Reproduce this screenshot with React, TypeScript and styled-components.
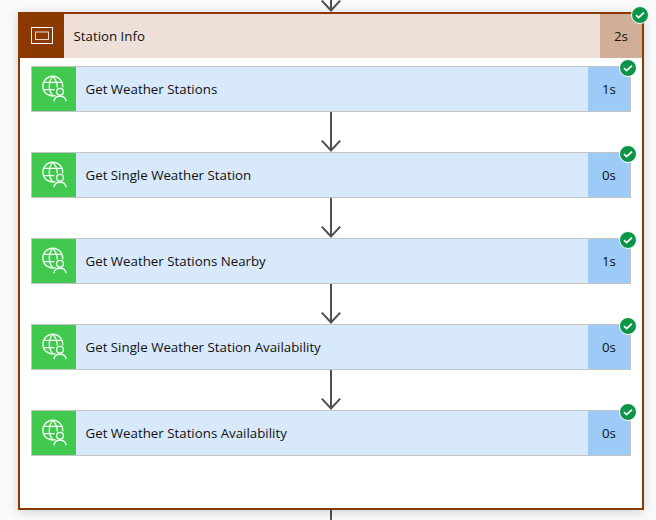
import { Fragment } from 'react'
import styled, { createGlobalStyle } from 'styled-components'

const brown = '#8c3900'
const arrowColor = '#505050'

const steps = [
  { name: 'Get Weather Stations', duration: '1s' },
  { name: 'Get Single Weather Station', duration: '0s' },
  { name: 'Get Weather Stations Nearby', duration: '1s' },
  { name: 'Get Single Weather Station Availability', duration: '0s' },
  { name: 'Get Weather Stations Availability', duration: '0s' },
]

const GlobalStyle = createGlobalStyle`
  html, body {
    margin: 0;
    padding: 0;
    background: #fafafa;
    overflow: hidden;
  }
  body {
    font-family: "Open Sans", "Noto Sans", "Liberation Sans", sans-serif;
  }
`

const Page = styled.div`
  width: 656px;
  height: 520px;
  overflow: hidden;
  display: flex;
  flex-direction: column;
  align-items: center;
  padding-left: 6px;
  box-sizing: border-box;
`

const TopConnector = styled.div`
  height: 12px;
  flex: none;
  overflow: hidden;
  display: flex;
  align-items: flex-end;
`

const BottomLine = styled.div`
  width: 2px;
  height: 10px;
  flex: none;
  background: ${arrowColor};
`

const Scope = styled.div`
  position: relative;
  width: 626px;
  height: 498px;
  flex: none;
  box-sizing: border-box;
  border: 2px solid ${brown};
  background: #fff;
  box-shadow: 0 2px 10px rgba(0, 0, 0, 0.16);
`

const ScopeHeader = styled.div`
  height: 44px;
  display: flex;
  align-items: stretch;
  background: #eee0d9;
`

const ScopeIcon = styled.div`
  width: 44px;
  flex: none;
  display: flex;
  align-items: center;
  justify-content: center;
  background: ${brown};
`

const Title = styled.div<{ $indent: number }>`
  flex: 1;
  display: flex;
  align-items: center;
  padding-left: ${(p) => p.$indent}px;
  font-size: 13.3px;
  color: #111;
  white-space: nowrap;
`

const Duration = styled.div<{ $color: string }>`
  width: 42px;
  flex: none;
  display: flex;
  align-items: center;
  justify-content: center;
  font-size: 13.3px;
  color: #111;
  background: ${(p) => p.$color};
`

const StepList = styled.div`
  display: flex;
  flex-direction: column;
  align-items: center;
  padding: 8px 11px 0;
`

const Card = styled.div`
  position: relative;
  width: 600px;
  height: 46px;
  flex: none;
  box-sizing: border-box;
  display: flex;
  align-items: stretch;
  border: 1px solid #c4c4c4;
  background: #d7e9fb;
`

const CardIcon = styled.div`
  width: 44px;
  flex: none;
  display: flex;
  align-items: center;
  justify-content: center;
  background: #41c94f;
`

const Badge = styled.div<{ $top: number; $right: number }>`
  position: absolute;
  top: ${(p) => p.$top}px;
  right: ${(p) => p.$right}px;
  width: 18px;
  height: 18px;
  box-sizing: border-box;
  border: 1px solid #fff;
  border-radius: 50%;
  background: #0c9449;
  display: flex;
  align-items: center;
  justify-content: center;
`

const ArrowSvg = styled.svg`
  display: block;
  flex: none;
`

function Check() {
  return (
    <svg width="12" height="10" viewBox="0 0 12 10">
      <path d="M2 5.2 4.6 7.6 10 2.6" fill="none" stroke="#fff" strokeWidth="1.8" />
    </svg>
  )
}

function Arrow() {
  return (
    <ArrowSvg width="22" height="40" viewBox="0 0 22 40">
      <path d="M11 0V38.5M1.8 28.6 11 38.5 20.2 28.6" fill="none" stroke={arrowColor} strokeWidth="2" />
    </ArrowSvg>
  )
}

function GlobeUser() {
  return (
    <svg width="26" height="28" viewBox="0 0 26 28" fill="none" stroke="#f0fbf1" strokeWidth="1.4">
      <path d="M14.6 20.6A9.9 9.9 0 1 1 21.6 12.4" />
      <path d="M11.8 1.1C7.2 6.5 7.2 15.5 11.8 20.9M11.8 1.1C15.4 5.4 16.4 9 16.2 12.6" />
      <path d="M2.8 7.4H20.8M2.6 14.6H13.4" />
      <circle cx="19" cy="16.8" r="3.4" />
      <path d="M13 26.2C13.2 22.8 15.6 21.2 19 21.2S24.8 22.8 25 26.2" />
    </svg>
  )
}

function ScopeGlyph() {
  return (
    <svg width="22" height="18" viewBox="0 0 22 18" fill="none">
      <rect x="0.5" y="0.5" width="21" height="16" stroke="#fff" />
      <rect x="4.5" y="5" width="13" height="7.5" stroke="#f0dccd" />
    </svg>
  )
}

export default function App() {
  return (
    <Page>
      <GlobalStyle />
      <TopConnector>
        <Arrow />
      </TopConnector>
      <Scope>
        <ScopeHeader>
          <ScopeIcon>
            <ScopeGlyph />
          </ScopeIcon>
          <Title $indent={9.5}>Station Info</Title>
          <Duration $color="#d0ae97">2s</Duration>
        </ScopeHeader>
        <Badge $top={-8} $right={-7}>
          <Check />
        </Badge>
        <StepList>
          {steps.map((step, i) => (
            <Fragment key={step.name}>
              {i > 0 && <Arrow />}
              <Card>
                <CardIcon>
                  <GlobeUser />
                </CardIcon>
                <Title $indent={9.5}>{step.name}</Title>
                <Duration $color="#9bcbf6">{step.duration}</Duration>
                <Badge $top={-8} $right={-7}>
                  <Check />
                </Badge>
              </Card>
            </Fragment>
          ))}
        </StepList>
      </Scope>
      <BottomLine />
    </Page>
  )
}
